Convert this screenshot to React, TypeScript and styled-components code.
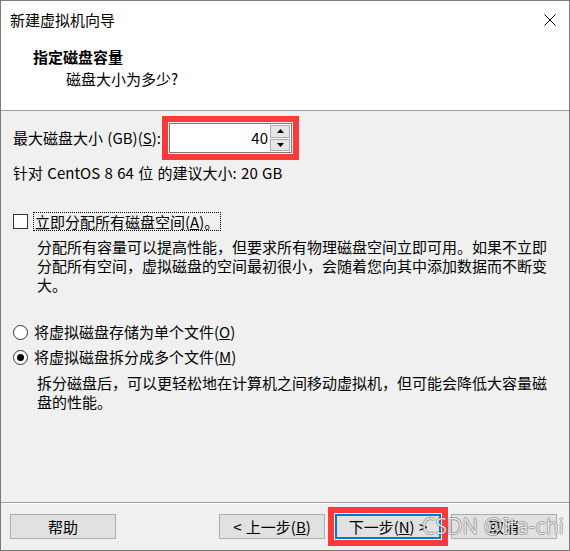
import React from "react";
import styled, { createGlobalStyle } from "styled-components";

const GlobalStyle = createGlobalStyle`
  html, body { margin: 0; padding: 0; background: #ffffff; }
  body { font-family: "Noto Sans CJK SC", "Noto Sans", sans-serif; font-size: 15px; color: #000; }
  * { box-sizing: border-box; }
`;

const Window = styled.div`
  position: relative;
  width: 570px;
  height: 551px;
  border: 1px solid #7a7a7a;
  background: #f0f0f0;
  display: flex;
  flex-direction: column;
  overflow: hidden;
`;

const TitleBar = styled.div`
  height: 37px;
  background: #fff;
  display: flex;
  align-items: center;
  justify-content: space-between;
  padding: 0 13px 0 9px;
  line-height: 20px;
`;

const CloseBtn = styled.div`
  width: 12px;
  height: 12px;
  display: flex;
`;

const Header = styled.div`
  background: #fff;
  padding: 9px 0 21px 32px;
  border-bottom: 1px solid #a0a0a0;
`;

const HeaderTitle = styled.div`
  font-weight: 700;
  line-height: 20px;
`;

const HeaderSub = styled.div`
  line-height: 20px;
  margin-top: 2px;
  padding-left: 33px;
`;

const Body = styled.div`
  flex: 1;
  padding: 12px 12px 0 12px;
  display: flex;
  flex-direction: column;
`;

const SizeRow = styled.div`
  display: flex;
  align-items: center;
  height: 30px;
`;

const SizeLabel = styled.div`
  width: 156px;
  line-height: 20px;
  white-space: nowrap;
  word-spacing: 1px;
`;

const Spin = styled.div`
  width: 123px;
  height: 30px;
  display: flex;
  border: 1px solid #7a7a7a;
  background: #fff;
  outline: 6px solid #fd3a3a;
  outline-offset: 1px;
`;

const SpinInput = styled.div`
  flex: 1;
  text-align: right;
  padding-right: 2px;
  line-height: 27px;
`;

const SpinButtons = styled.div`
  width: 21px;
  display: flex;
  flex-direction: column;
  gap: 1px;
  padding: 1px 1px 1px 0;
`;

const SpinBtn = styled.div`
  flex: 1;
  background: #e5e5e5;
  border: 1px solid #adadad;
  display: flex;
  align-items: center;
  justify-content: center;
`;

const Text = styled.div<{ $mt?: number; $indent?: number }>`
  line-height: 19px;
  margin-top: ${(p) => p.$mt ?? 0}px;
  padding-left: ${(p) => p.$indent ?? 0}px;
  white-space: nowrap;
  word-spacing: 1px;
`;

const OptionRow = styled.div<{ $mt: number; $h: number }>`
  display: flex;
  align-items: center;
  height: ${(p) => p.$h}px;
  margin-top: ${(p) => p.$mt}px;
`;

const CheckBox = styled.div`
  width: 15px;
  height: 15px;
  border: 1px solid #333;
  background: #fff;
  margin-right: 5px;
  flex: none;
`;

const Radio = styled.div<{ $checked?: boolean }>`
  width: 15px;
  height: 15px;
  border-radius: 50%;
  border: 1px solid #333;
  background: #fff;
  margin-right: 6px;
  flex: none;
  display: flex;
  align-items: center;
  justify-content: center;
  &::after {
    content: "";
    display: ${(p) => (p.$checked ? "block" : "none")};
    width: 7px;
    height: 7px;
    border-radius: 50%;
    background: #000;
  }
`;

const FocusLabel = styled.span`
  border: 1px dotted #000;
  line-height: 17px;
  padding: 0 1px;
`;

const OptionLabel = styled.span`
  line-height: 20px;
`;

const Footer = styled.div`
  border-top: 1px solid #a0a0a0;
  box-shadow: inset 0 1px 0 #fff;
  height: 48px;
  padding: 11px 12px 11px 9px;
  display: flex;
  align-items: stretch;
  gap: 10px;
`;

const Spacer = styled.div`
  flex: 1;
`;

const Button = styled.div<{ $primary?: boolean; $highlight?: boolean }>`
  width: 106px;
  height: 25px;
  background: #e1e1e1;
  border: ${(p) => (p.$primary ? "2px solid #0078d7" : "1px solid #adadad")};
  display: flex;
  align-items: center;
  justify-content: center;
  line-height: 20px;
  white-space: nowrap;
  word-spacing: 1px;
  ${(p) => (p.$highlight ? "outline: 6px solid #fd3a3a; outline-offset: 1px;" : "")}
`;

const Watermark = styled.div`
  position: absolute;
  left: 421px;
  top: 511px;
  font-family: "Noto Sans", "DejaVu Sans", sans-serif;
  font-size: 21px;
  font-weight: 300;
  line-height: 28px;
  color: rgba(255, 255, 255, 0.9);
  text-shadow: 1px 0 0 rgba(110, 110, 110, 0.55), -1px 0 0 rgba(110, 110, 110, 0.55),
    0 1px 0 rgba(110, 110, 110, 0.55), 0 -1px 0 rgba(110, 110, 110, 0.55);
  letter-spacing: 0.3px;
  pointer-events: none;
`;

export default function App() {
  return (
    <>
      <GlobalStyle />
      <Window>
        <TitleBar>
          <span>新建虚拟机向导</span>
          <CloseBtn>
            <svg width="12" height="12" viewBox="0 0 12 12">
              <path d="M0.5 0.5 L11.5 11.5 M11.5 0.5 L0.5 11.5" stroke="#000" strokeWidth="1" fill="none" />
            </svg>
          </CloseBtn>
        </TitleBar>
        <Header>
          <HeaderTitle>指定磁盘容量</HeaderTitle>
          <HeaderSub>磁盘大小为多少?</HeaderSub>
        </Header>
        <Body>
          <SizeRow>
            <SizeLabel>
              最大磁盘大小 (GB)(<u>S</u>):
            </SizeLabel>
            <Spin>
              <SpinInput>40</SpinInput>
              <SpinButtons>
                <SpinBtn>
                  <svg width="7" height="4" viewBox="0 0 7 4">
                    <path d="M3.5 0 L7 4 L0 4 Z" fill="#000" />
                  </svg>
                </SpinBtn>
                <SpinBtn>
                  <svg width="7" height="4" viewBox="0 0 7 4">
                    <path d="M0 0 L7 0 L3.5 4 Z" fill="#000" />
                  </svg>
                </SpinBtn>
              </SpinButtons>
            </Spin>
          </SizeRow>
          <Text $mt={10}>针对 CentOS 8 64 位 的建议大小: 20 GB</Text>
          <OptionRow $mt={30} $h={19}>
            <CheckBox />
            <FocusLabel>
              立即分配所有磁盘空间(<u>A</u>)。
            </FocusLabel>
          </OptionRow>
          <Text $mt={6} $indent={24}>
            分配所有容量可以提高性能，但要求所有物理磁盘空间立即可用。如果不立即
            <br />
            分配所有空间，虚拟磁盘的空间最初很小，会随着您向其中添加数据而不断变
            <br />
            大。
          </Text>
          <OptionRow $mt={28} $h={20}>
            <Radio />
            <OptionLabel>
              将虚拟磁盘存储为单个文件(<u>O</u>)
            </OptionLabel>
          </OptionRow>
          <OptionRow $mt={5} $h={20}>
            <Radio $checked />
            <OptionLabel>
              将虚拟磁盘拆分成多个文件(<u>M</u>)
            </OptionLabel>
          </OptionRow>
          <Text $mt={6} $indent={24}>
            拆分磁盘后，可以更轻松地在计算机之间移动虚拟机，但可能会降低大容量磁
            <br />
            盘的性能。
          </Text>
        </Body>
        <Footer>
          <Button>帮助</Button>
          <Spacer />
          <Button>
            &lt; 上一步(<u>B</u>)
          </Button>
          <Button $primary $highlight>
            下一步(<u>N</u>) &gt;
          </Button>
          <Button>取消</Button>
        </Footer>
        <Watermark>CSDN @Ita-chi</Watermark>
      </Window>
    </>
  );
}
